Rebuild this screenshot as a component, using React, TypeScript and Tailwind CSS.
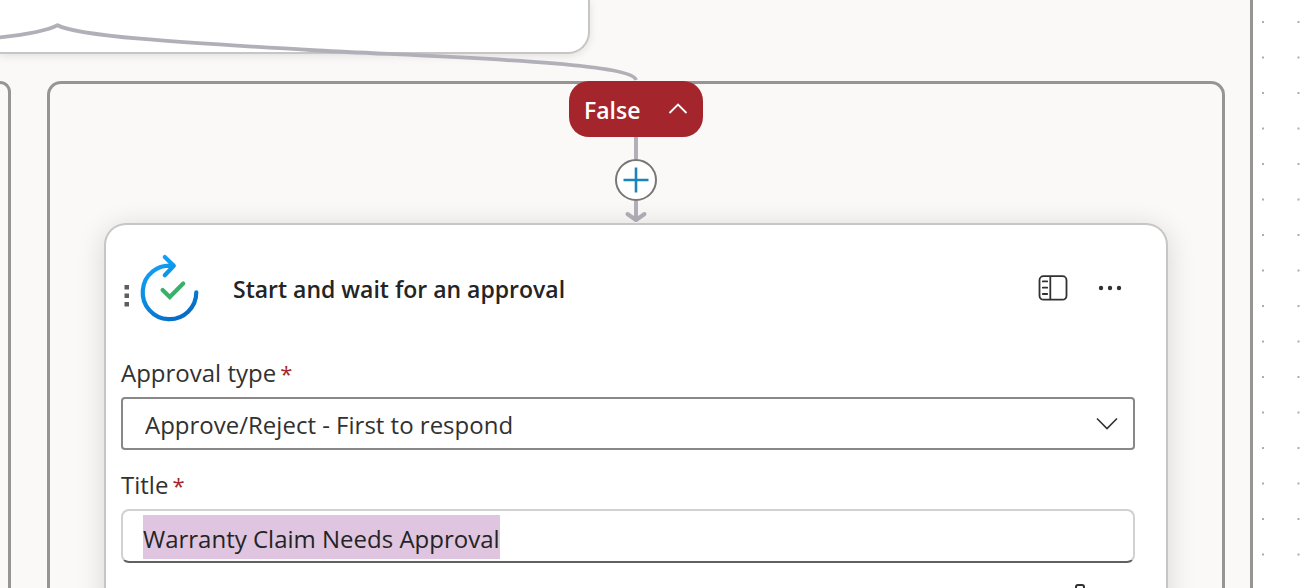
import { useEffect, useRef, useState } from "react";

function CanvasDots() {
  return (
    <svg className="absolute inset-y-0 right-0 h-full w-[59px]" aria-hidden="true">
      <defs>
        <pattern id="dots" x="9" y="21" width="35.5" height="35.5" patternUnits="userSpaceOnUse">
          <rect width="2" height="2" rx="0.5" fill="#a6a6a6" />
        </pattern>
      </defs>
      <rect width="100%" height="100%" fill="url(#dots)" />
    </svg>
  );
}

function BranchEdge() {
  return (
    <svg className="pointer-events-none absolute top-0 left-0 h-[84px] w-[660px]" viewBox="0 0 660 84" fill="none" aria-hidden="true">
      <path
        d="M-4 37.8C24 35 48 30.500 57.500 25.200C78 36 170 42 318 50.500C440 57 632 62 636 80"
        stroke="#b1b0b8"
        strokeWidth="3.800"
        strokeLinejoin="round"
      />
    </svg>
  );
}

function ApprovalIcon() {
  return (
    <svg className="h-[70px] w-[62px] shrink-0" viewBox="139 253 62 70" fill="none" aria-hidden="true">
      <defs>
        <linearGradient id="ring" x1="150" y1="255" x2="190" y2="320" gradientUnits="userSpaceOnUse">
          <stop stopColor="#14a8fb" />
          <stop offset="0.500" stopColor="#0b8ae0" />
          <stop offset="1" stopColor="#0566c0" />
        </linearGradient>
      </defs>
      <path
        d="M196.300 292.300A26.800 26.800 0 1 1 173 265.800M164.800 257L173.800 265.800L164.800 275.200"
        stroke="url(#ring)"
        strokeWidth="4.200"
        strokeLinecap="round"
        strokeLinejoin="round"
      />
      <path d="M162.600 290L169.800 297L183.200 283.500" stroke="#3bb06b" strokeWidth="4.200" strokeLinecap="round" />
    </svg>
  );
}

function PanelIcon() {
  return (
    <svg className="h-[28px] w-[30px]" viewBox="0 0 30 28" fill="none" stroke="#323130" strokeWidth="1.800" aria-hidden="true">
      <rect x="1.500" y="2.200" width="27" height="23.500" rx="4" />
      <path d="M12.300 2.200V25.700" />
      <path d="M4.800 7.400H9.200M4.800 13.700H9.200M4.800 20H9.200" strokeLinecap="round" />
    </svg>
  );
}

function Label({ htmlFor, children }: { htmlFor: string; children: string }) {
  return (
    <label htmlFor={htmlFor} className="flex h-8 gap-1 text-[24px] leading-8 text-[#323130]">
      {children}
      <span className="text-[22px] leading-8 text-[#a4262c]">*</span>
    </label>
  );
}

function ApprovalCard() {
  const titleRef = useRef<HTMLInputElement>(null);
  const [title, setTitle] = useState("Warranty Claim Needs Approval");

  useEffect(() => {
    titleRef.current?.focus({ preventScroll: true });
    titleRef.current?.select();
  }, []);

  return (
    <article className="w-full flex-1 rounded-t-[22px] border-2 border-b-0 border-[#c8c6c4] bg-white pt-7 pr-[31px] pl-[15px] shadow-[0_4px_28px_rgba(0,0,0,0.14)]">
      <header className="flex h-[70px] items-center">
        <svg className="mt-4 h-[22px] w-[16px] shrink-0" viewBox="0 0 16 22" fill="#605e5c" aria-hidden="true">
          <rect x="3.500" y="0" width="4.500" height="4.500" />
          <rect x="3.500" y="8.500" width="4.500" height="4.500" />
          <rect x="3.500" y="17" width="4.500" height="4.500" />
        </svg>
        <div className="ml-0.5">
          <ApprovalIcon />
        </div>
        <h2 className="ml-8 flex-1 pt-0.5 text-[23px] leading-8 font-semibold text-[#242424]">Start and wait for an approval</h2>
        <button type="button" aria-label="Show details panel">
          <PanelIcon />
        </button>
        <button type="button" aria-label="More options" className="mr-[11px] ml-7">
          <svg className="h-6 w-[28px]" viewBox="0 0 28 24" fill="#323130" aria-hidden="true">
            <circle cx="5" cy="12" r="2.200" />
            <circle cx="14" cy="12" r="2.200" />
            <circle cx="23" cy="12" r="2.200" />
          </svg>
        </button>
      </header>

      <div className="mt-[34px]">
        <Label htmlFor="approval-type">Approval type</Label>
        <div className="relative mt-2">
          <select
            id="approval-type"
            className="block h-[53px] w-full appearance-none rounded-[4px] border-2 border-[#8a8886] bg-white pt-0.5 pr-14 pl-[22px] text-[24px] text-[#323130] outline-none"
          >
            <option>Approve/Reject - First to respond</option>
          </select>
          <svg className="pointer-events-none absolute top-5 right-4 h-[14px] w-6" viewBox="0 0 24 14" fill="none" aria-hidden="true">
            <path d="M2 1.500L12 11.500L22 1.500" stroke="#323130" strokeWidth="1.600" />
          </svg>
        </div>
      </div>

      <div className="mt-[19px]">
        <Label htmlFor="approval-title">Title</Label>
        <div className="mt-2 h-[54px] rounded-[8px] border-2 border-[#d1d1d1] border-b-[#616161] bg-white px-5 pt-1">
          <input
            ref={titleRef}
            id="approval-title"
            type="text"
            value={title}
            onChange={(event) => setTitle(event.target.value)}
            className="field-sizing-content block h-11 max-w-full min-w-4 pt-0.5 text-[24px] text-[#242424] outline-none selection:bg-transparent selection:text-[#242424] focus:bg-[#dfc5e0]"
          />
        </div>
      </div>

      <div className="mt-5 flex justify-end pr-[46px]">
        <svg className="h-7 w-[18px]" viewBox="0 0 18 28" fill="none" stroke="#323130" strokeWidth="2" aria-hidden="true">
          <path d="M5 8V4A2 2 0 0 1 7 2H11A2 2 0 0 1 13 4V8M2 8H16V26H2Z" />
        </svg>
      </div>
    </article>
  );
}

export default function App() {
  const [open, setOpen] = useState(true);

  return (
    <main className="relative h-screen overflow-hidden bg-white pr-[59px] font-['Open_Sans','Noto_Sans',sans-serif]">
      <CanvasDots />
      <section className="flex h-full flex-col border-r-[3px] border-[#979593] bg-[#faf9f8]">
        <div className="h-[54px] w-[590px] shrink-0 rounded-br-[22px] border-r-2 border-b-2 border-[#c8c6c4] bg-white shadow-[0_2px_8px_rgba(0,0,0,0.1)]" />

        <div className="mt-[27px] flex min-h-0 flex-1 gap-9 pr-[25px]">
          <div className="w-[11px] shrink-0 rounded-tr-[14px] border-t-[3px] border-r-[3px] border-[#979593]" />
          <div className="flex min-w-0 flex-1 flex-col items-center rounded-t-[14px] border-[3px] border-b-0 border-[#979593] px-[54px]">
            <button
              type="button"
              aria-expanded={open}
              onClick={() => setOpen(!open)}
              className="-mt-[3px] flex h-14 w-[134px] shrink-0 items-center justify-between rounded-[20px] bg-[#a4262c] px-[15px] text-[23px] font-semibold text-white"
            >
              <span className="pt-0.5">False</span>
              <svg className="h-3 w-5" viewBox="0 0 20 12" fill="none" aria-hidden="true">
                <path d="M1.500 10L10 1.500L18.500 10" stroke="#fff" strokeWidth="1.800" />
              </svg>
            </button>
            <div className="h-[22px] w-1 shrink-0 bg-[#b1b0b8]" />
            <button
              type="button"
              aria-label="Insert a new step"
              className="flex size-[42px] shrink-0 items-center justify-center rounded-full border-2 border-[#797775] bg-white"
            >
              <svg className="size-[26px]" viewBox="0 0 26 26" fill="none" aria-hidden="true">
                <path d="M13 0.500V25.500M0.500 13H25.500" stroke="#1a86b8" strokeWidth="2.600" />
              </svg>
            </button>
            <svg className="h-[22px] w-6 shrink-0" viewBox="0 0 24 22" fill="none" stroke="#b1b0b8" strokeWidth="4" aria-hidden="true">
              <path d="M12 0V18" />
              <path d="M3.500 13L12 19L20.500 13" strokeLinecap="round" strokeLinejoin="round" />
            </svg>
            {open && <ApprovalCard />}
          </div>
        </div>
      </section>
      <BranchEdge />
    </main>
  );
}
